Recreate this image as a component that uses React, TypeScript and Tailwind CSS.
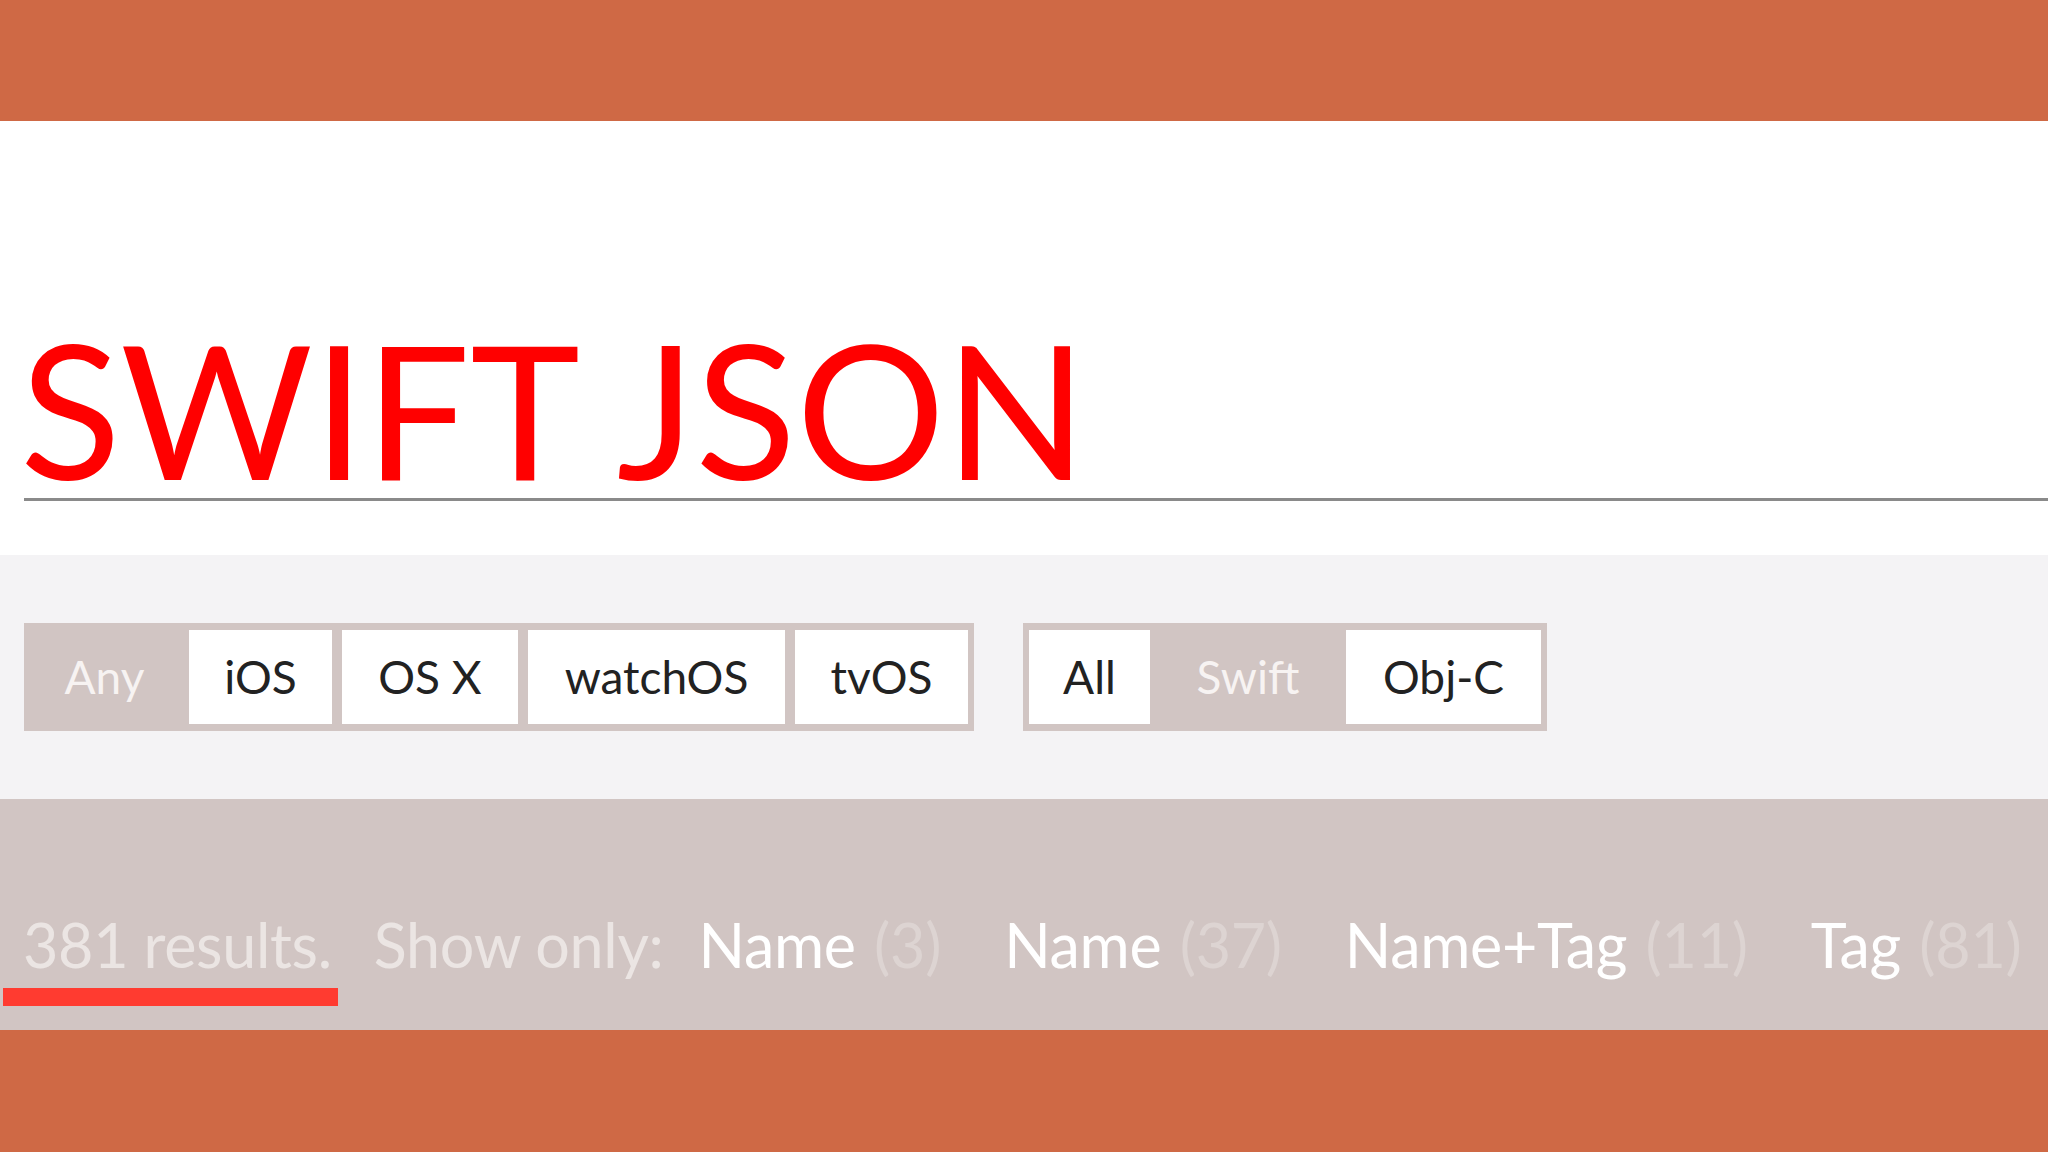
import React from 'react';

const platforms = [
  { label: 'Any', width: 'w-[149px]', active: true },
  { label: 'iOS', width: 'w-[143px]', active: false },
  { label: 'OS X', width: 'w-[176px]', active: false },
  { label: 'watchOS', width: 'w-[257px]', active: false },
  { label: 'tvOS', width: 'w-[173px]', active: false },
];

const languages = [
  { label: 'All', width: 'w-[121px]', active: false },
  { label: 'Swift', width: 'w-[176px]', active: true },
  { label: 'Obj-C', width: 'w-[195px]', active: false },
];

const filters = [
  { label: 'Name', count: 3 },
  { label: 'Name', count: 37 },
  { label: 'Name+Tag', count: 11 },
  { label: 'Tag', count: 81 },
];

type Option = { label: string; width: string; active: boolean };

const Segmented: React.FC<{ options: Option[]; className?: string }> = ({ options, className }) => (
  <div className={`flex gap-[10px] bg-[#d1c5c3] px-[6px] py-[7px] ${className ?? ''}`}>
    {options.map((o) => (
      <div
        key={o.label}
        className={`${o.width} h-[94px] flex items-center justify-center text-[46px] leading-none ${
          o.active ? 'text-[#f7f3f2]' : 'bg-white text-[#222222]'
        }`}
      >
        {o.label}
      </div>
    ))}
  </div>
);

export default function App() {
  return (
    <div className="w-[2048px] h-[1152px] flex flex-col font-[Lato,sans-serif] overflow-hidden">
      {/* top band */}
      <div className="h-[121px] bg-[#cf6945]" />

      {/* title */}
      <div className="h-[434px] bg-white pt-[198px]">
        <div className="ml-[24px] border-b-[3px] border-[#8a8a8a]">
          <h1 className="-ml-[4px] text-[186px] leading-[179px] text-[#ff0000] font-normal">SWIFT JSON</h1>
        </div>
      </div>

      {/* filter toggles */}
      <div className="h-[244px] bg-[#f4f3f5] pt-[68px] pl-[24px] flex items-start">
        <Segmented options={platforms} />
        <Segmented options={languages} className="ml-[49px]" />
      </div>

      {/* results bar */}
      <div className="h-[231px] bg-[#d1c5c3] pt-[115px]">
        <div className="flex items-baseline pl-[23px] text-[61px] tracking-[-0.3px] leading-none whitespace-nowrap">
          <span className="text-[#ebe5e3] mr-[42px]">381 results.</span>
          <span className="text-[#ebe5e3] mr-[35px]">Show only:</span>
          <div className="flex items-baseline gap-[63px]">
            {filters.map((f, i) => (
              <span key={i} className="text-white">
                {f.label} <span className="ml-[3px] text-[#ddd4d2]">({f.count})</span>
              </span>
            ))}
          </div>
        </div>
        <div className="mt-[13px] ml-[3px] w-[335px] h-[18px] bg-[#ff3b30]" />
      </div>

      {/* bottom band */}
      <div className="flex-1 bg-[#cf6945]" />
    </div>
  );
}
